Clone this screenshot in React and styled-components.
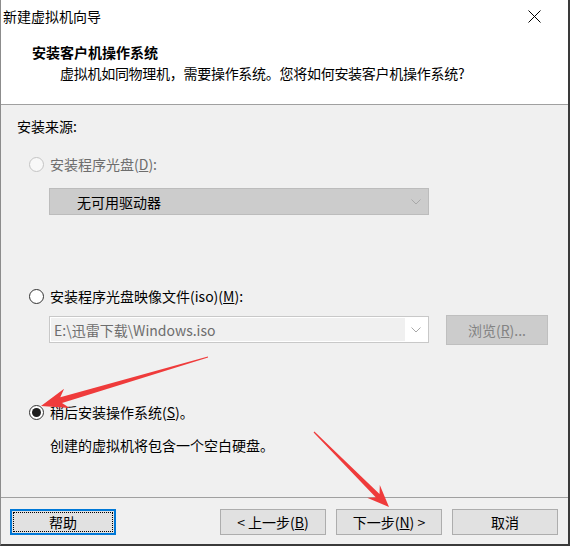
import React from 'react'
import styled, { createGlobalStyle } from 'styled-components'

const GlobalStyle = createGlobalStyle`
  html, body {
    margin: 0;
    padding: 0;
    background: #f0f0f0;
  }
  body {
    font-family: "Noto Sans CJK SC", "Noto Sans", sans-serif;
    font-size: 14px;
    color: #000;
  }
`

const Window = styled.div`
  position: relative;
  box-sizing: border-box;
  width: 570px;
  height: 546px;
  display: flex;
  flex-direction: column;
  background: #f0f0f0;
  border-left: 1px solid #8c8c8c;
  border-right: 2px solid #3a3a3a;
  border-bottom: 2px solid #3a3a3a;
`

const TitleBar = styled.div`
  height: 31px;
  flex: none;
  display: flex;
  align-items: center;
  justify-content: space-between;
  background: #fff;
  padding: 1px 27px 0 2px;
  box-sizing: border-box;
  line-height: 20px;
`

const Header = styled.div`
  flex: none;
  background: #fff;
  padding: 11px 0 19px 31px;
  border-bottom: 1px solid #a0a0a0;
  line-height: 20px;
`

const HeaderTitle = styled.div`
  font-weight: bold;
`

const HeaderSub = styled.div`
  margin: 1px 0 0 28px;
  height: 22px;
  letter-spacing: -0.28px;
`

const Body = styled.div`
  flex: 1;
  padding: 11px 0 0 16px;
  line-height: 20px;
`

const Row = styled.div`
  display: flex;
  align-items: center;
  margin-top: ${p => p.$top}px;
  margin-left: ${p => p.$left || 0}px;
  color: ${p => (p.$disabled ? '#6d6d6d' : '#000')};
  height: 20px;
`

const Radio = styled.span`
  box-sizing: border-box;
  width: 15px;
  height: 15px;
  border-radius: 50%;
  border: 1px solid ${p => (p.$disabled ? '#c4c4c4' : '#333')};
  background: ${p => (p.$disabled ? '#f8f8f8' : '#fff')};
  margin-right: 6px;
  display: flex;
  align-items: center;
  justify-content: center;
  &::after {
    content: '';
    width: 9px;
    height: 9px;
    border-radius: 50%;
    background: #1e1e1e;
    display: ${p => (p.$checked ? 'block' : 'none')};
  }
`

const DriveSelect = styled.div`
  box-sizing: border-box;
  margin: 14px 0 0 32px;
  width: 380px;
  height: 27px;
  background: #cccccc;
  border: 1px solid #bcbcbc;
  display: flex;
  align-items: center;
  justify-content: space-between;
  padding: 0 7px 0 27px;
`

const IsoRow = styled.div`
  display: flex;
  align-items: flex-start;
  margin: 9px 0 0 32px;
`

const Combo = styled.div`
  box-sizing: border-box;
  margin-top: 1px;
  width: 380px;
  height: 27px;
  background: #fff;
  border: 1px solid #c8c8c8;
  padding: 1px;
  display: flex;
  align-items: stretch;
`

const EditField = styled.div`
  flex: 1;
  background: #f0f0f0;
  color: #6d6d6d;
  padding-left: 3px;
  display: flex;
  align-items: center;
`

const ChevronBox = styled.div`
  width: 22px;
  display: flex;
  align-items: center;
  justify-content: center;
  margin-top: 1px;
`

const DisabledButton = styled.div`
  box-sizing: border-box;
  margin-left: 17px;
  width: 102px;
  height: 30px;
  background: #cccccc;
  border: 1px solid #bfbfbf;
  color: #838383;
  display: flex;
  align-items: center;
  justify-content: center;
`

const Desc = styled.div`
  margin: 13px 0 0 33px;
`

const Footer = styled.div`
  flex: none;
  height: 47px;
  box-sizing: border-box;
  border-top: 1px solid #a0a0a0;
  padding: 11px 10px 0 9px;
  display: flex;
  align-items: flex-start;
`

const ButtonGroup = styled.div`
  margin-left: auto;
  display: flex;
  gap: 10px;
`

const Button = styled.div`
  position: relative;
  box-sizing: border-box;
  width: 106px;
  height: 26px;
  background: #e1e1e1;
  border: ${p => (p.$focused ? '2px solid #0078d7' : '1px solid #adadad')};
  display: flex;
  align-items: center;
  justify-content: center;
  line-height: 20px;
  ${p =>
    p.$focused &&
    `&::after {
      content: '';
      position: absolute;
      inset: 1px;
      border: 1px dotted #000;
    }`}
`

const Overlay = styled.svg`
  position: absolute;
  left: -1px;
  top: 0;
  width: 570px;
  height: 546px;
  pointer-events: none;
`

function Chevron() {
  return (
    <svg width="10" height="6" viewBox="0 0 10 6">
      <path d="M0.5 0.5 L5 5 L9.5 0.5" fill="none" stroke="#a8a8a8" strokeWidth="1" />
    </svg>
  )
}

function arrowPoints(tx, ty, px, py, { wing, neck, hw, sw, tw }) {
  const dx = px - tx
  const dy = py - ty
  const len = Math.hypot(dx, dy)
  const ux = dx / len
  const uy = dy / len
  const nx = -uy
  const ny = ux
  const pt = (d, w) => `${(px - ux * d + nx * w).toFixed(1)},${(py - uy * d + ny * w).toFixed(1)}`
  return [
    `${(tx + nx * tw).toFixed(1)},${(ty + ny * tw).toFixed(1)}`,
    pt(neck, sw),
    pt(wing, hw),
    `${px},${py}`,
    pt(wing, -hw),
    pt(neck, -sw),
    `${(tx - nx * tw).toFixed(1)},${(ty - ny * tw).toFixed(1)}`
  ].join(' ')
}

export default function App() {
  return (
    <>
      <GlobalStyle />
      <Window>
        <TitleBar>
          <span>新建虚拟机向导</span>
          <svg width="13" height="13" viewBox="0 0 13 13">
            <path d="M0.5 0.5 L12.5 12.5 M12.5 0.5 L0.5 12.5" stroke="#000" strokeWidth="1" />
          </svg>
        </TitleBar>

        <Header>
          <HeaderTitle>安装客户机操作系统</HeaderTitle>
          <HeaderSub>虚拟机如同物理机，需要操作系统。您将如何安装客户机操作系统?</HeaderSub>
        </Header>

        <Body>
          <div>安装来源:</div>

          <Row $top={18} $left={12} $disabled>
            <Radio $disabled />
            <span>安装程序光盘(<u>D</u>):</span>
          </Row>
          <DriveSelect>
            <span>无可用驱动器</span>
            <Chevron />
          </DriveSelect>

          <Row $top={71} $left={12}>
            <Radio />
            <span>安装程序光盘映像文件(iso)(<u>M</u>):</span>
          </Row>
          <IsoRow>
            <Combo>
              <EditField>E:\迅雷下载\Windows.iso</EditField>
              <ChevronBox>
                <Chevron />
              </ChevronBox>
            </Combo>
            <DisabledButton>浏览(<u>R</u>)...</DisabledButton>
          </IsoRow>

          <Row $top={57} $left={12}>
            <Radio $checked />
            <span>稍后安装操作系统(<u>S</u>)。</span>
          </Row>
          <Desc>创建的虚拟机将包含一个空白硬盘。</Desc>
        </Body>

        <Footer>
          <Button $focused>帮助</Button>
          <ButtonGroup>
            <Button>&lt; 上一步(<u>B</u>)</Button>
            <Button>下一步(<u>N</u>) &gt;</Button>
            <Button>取消</Button>
          </ButtonGroup>
        </Footer>

        <Overlay viewBox="0 0 570 546">
          <polygon
            points={arrowPoints(208, 357, 41, 406, { wing: 27, neck: 21, hw: 10, sw: 3, tw: 0.5 })}
            fill="#ef3b3b"
          />
          <polygon
            points={arrowPoints(314, 432, 389, 507, { wing: 22, neck: 16, hw: 9, sw: 2.5, tw: 0.5 })}
            fill="#ef3b3b"
          />
        </Overlay>
      </Window>
    </>
  )
}
